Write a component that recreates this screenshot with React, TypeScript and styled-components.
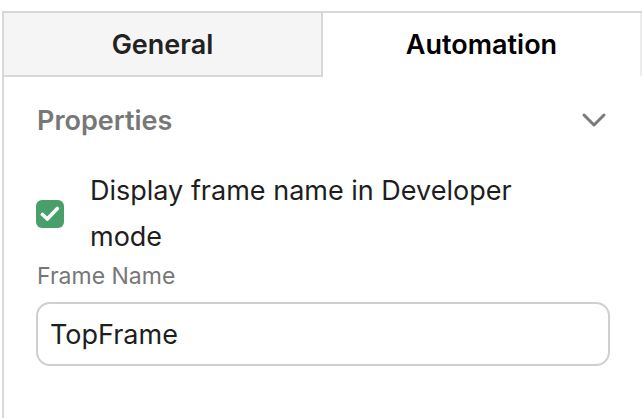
import styled, { createGlobalStyle } from "styled-components";

const GlobalStyle = createGlobalStyle`
  html, body {
    margin: 0;
    padding: 0;
    background: #fff;
    font-family: Inter, "Noto Sans", sans-serif;
  }
`;

const Panel = styled.div`
  margin: 11px 0 0 2px;
  width: 640px;
  height: 407px;
  box-sizing: border-box;
  border-top: 2px solid #d8d8d8;
  border-left: 2px solid #d8d8d8;
  display: flex;
  flex-direction: column;
`;

const Tabs = styled.div`
  display: flex;
  height: 64px;
`;

const Tab = styled.div<{ $active?: boolean }>`
  flex: 1;
  display: flex;
  align-items: center;
  justify-content: center;
  box-sizing: border-box;
  font-size: 27px;
  font-weight: 600;
  color: ${(p) => (p.$active ? "#000" : "#222")};
  background: ${(p) => (p.$active ? "#fff" : "#f5f5f5")};
  border-right: 2px solid ${(p) => (p.$active ? "#ececec" : "#d8d8d8")};
  border-bottom: 2px solid ${(p) => (p.$active ? "transparent" : "#d8d8d8")};
`;

const Body = styled.div`
  padding: 25px 32px 0 32px;
`;

const SectionHead = styled.div`
  display: flex;
  align-items: center;
  justify-content: space-between;
  height: 36px;
  padding: 0 3px 0 1px;
`;

const SectionTitle = styled.span`
  font-size: 27px;
  font-weight: 600;
  color: #777;
`;

const CheckRow = styled.label`
  display: flex;
  align-items: center;
  gap: 26px;
  margin-top: 30px;
  font-size: 27px;
  line-height: 46px;
  color: #1e1e1e;
`;

const CheckText = styled.span`
  max-width: 460px;
`;

const Box = styled.span`
  flex: none;
  width: 28px;
  height: 28px;
  border-radius: 6px;
  background: #489f6a;
  display: flex;
  align-items: center;
  justify-content: center;
`;

const FieldLabel = styled.div`
  font-size: 23px;
  color: #777;
  margin-top: 2px;
  padding-left: 1px;
  line-height: 28px;
`;

const Input = styled.div`
  margin-top: 12px;
  height: 64px;
  box-sizing: border-box;
  border: 2px solid #cfcfcf;
  border-radius: 14px;
  padding: 0 12px;
  display: flex;
  align-items: center;
  font-size: 27px;
  color: #1e1e1e;
`;

export default function App() {
  return (
    <>
      <GlobalStyle />
      <Panel>
        <Tabs>
          <Tab>General</Tab>
          <Tab $active>Automation</Tab>
        </Tabs>
        <Body>
          <SectionHead>
            <SectionTitle>Properties</SectionTitle>
            <svg width="26" height="16" viewBox="0 0 26 16">
              <path d="M3 3l10 10 10-10" fill="none" stroke="#7a7a7a" strokeWidth="3" strokeLinecap="round" strokeLinejoin="round" />
            </svg>
          </SectionHead>
          <CheckRow>
            <Box>
              <svg width="20" height="16" viewBox="0 0 20 16">
                <path d="M2.5 8.5l4.8 4.5 10-10.5" fill="none" stroke="#fff" strokeWidth="3.6" strokeLinecap="round" strokeLinejoin="round" />
              </svg>
            </Box>
            <CheckText>Display frame name in Developer mode</CheckText>
          </CheckRow>
          <FieldLabel>Frame Name</FieldLabel>
          <Input>TopFrame</Input>
        </Body>
      </Panel>
    </>
  );
}
